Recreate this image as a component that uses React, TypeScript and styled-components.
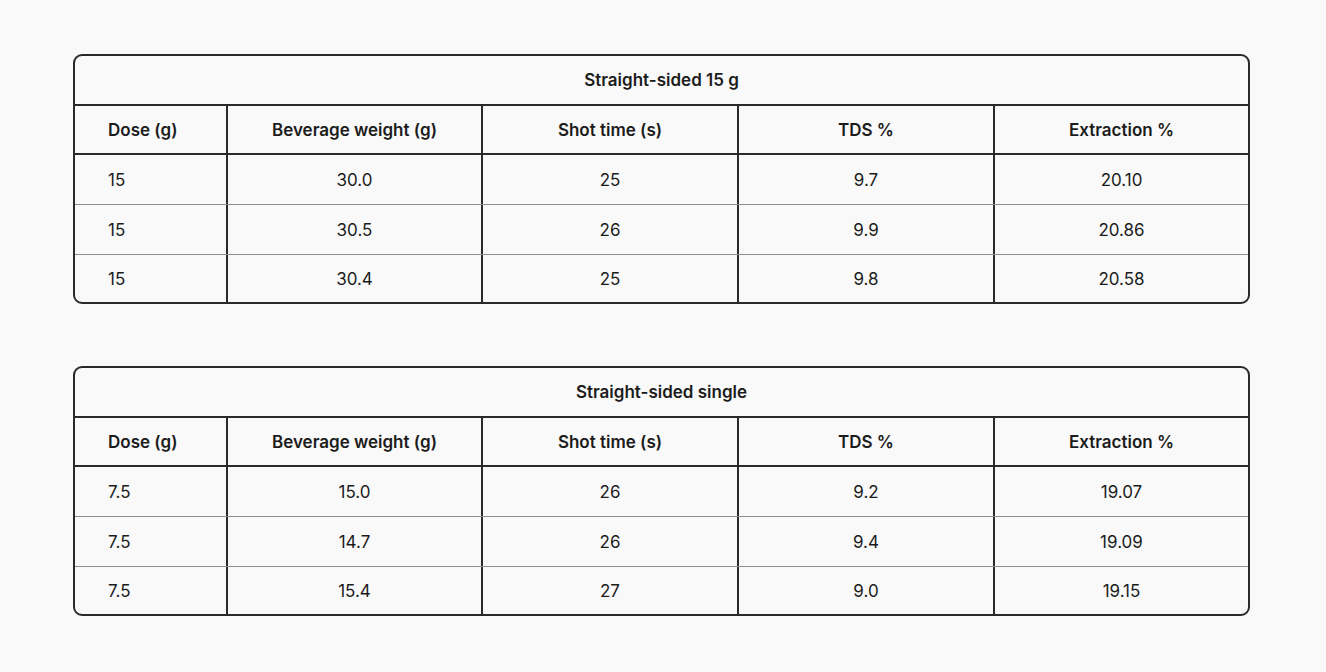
import React from "react";
import styled, { createGlobalStyle } from "styled-components";

const GlobalStyle = createGlobalStyle`
  *, *::before, *::after {
    box-sizing: border-box;
  }
  html, body {
    margin: 0;
    padding: 0;
    background: #f9f9f9;
  }
  body {
    font-family: Inter, Lato, "Noto Sans", Arial, sans-serif;
    color: #1c1c1c;
  }
`;

interface ITableData {
  title: string;
  rows: string[][];
}

const HEADERS = [
  "Dose (g)",
  "Beverage weight (g)",
  "Shot time (s)",
  "TDS %",
  "Extraction %",
];

const TABLES: ITableData[] = [
  {
    title: "Straight-sided 15 g",
    rows: [
      ["15", "30.0", "25", "9.7", "20.10"],
      ["15", "30.5", "26", "9.9", "20.86"],
      ["15", "30.4", "25", "9.8", "20.58"],
    ],
  },
  {
    title: "Straight-sided single",
    rows: [
      ["7.5", "15.0", "26", "9.2", "19.07"],
      ["7.5", "14.7", "26", "9.4", "19.09"],
      ["7.5", "15.4", "27", "9.0", "19.15"],
    ],
  },
];

function ResultTable({ title, rows }: ITableData) {
  return (
    <TableBox>
      <TitleRow>{title}</TitleRow>
      <HeadRow>
        {HEADERS.map((h, i) => (
          <Cell key={h} $first={i === 0} $head>
            {h}
          </Cell>
        ))}
      </HeadRow>
      {rows.map((row, r) => (
        <BodyRow key={r} $last={r === rows.length - 1}>
          {row.map((v, i) => (
            <Cell key={i} $first={i === 0}>
              {v}
            </Cell>
          ))}
        </BodyRow>
      ))}
    </TableBox>
  );
}

export default function App() {
  return (
    <>
      <GlobalStyle />
      <Page>
        {TABLES.map((t) => (
          <ResultTable key={t.title} title={t.title} rows={t.rows} />
        ))}
      </Page>
    </>
  );
}

const COLUMNS = "153px 255px 256px 256px 1fr";

const Page = styled.div`
  display: flex;
  flex-direction: column;
  gap: 62px;
  padding: 54px 0 0 73px;
  width: 1250px;
`;

const TableBox = styled.div`
  border: 2px solid #2a2a2a;
  border-radius: 9px;
  overflow: hidden;
  display: flex;
  flex-direction: column;
`;

const TitleRow = styled.div`
  height: 50px;
  display: flex;
  align-items: center;
  justify-content: center;
  border-bottom: 2px solid #2a2a2a;
  font-size: 17px;
  font-weight: 600;
`;

const HeadRow = styled.div`
  display: grid;
  grid-template-columns: ${COLUMNS};
  height: 49px;
  border-bottom: 2px solid #2a2a2a;
`;

const BodyRow = styled.div<{ $last?: boolean }>`
  display: grid;
  grid-template-columns: ${COLUMNS};
  height: ${(p) => (p.$last ? "47px" : "50px")};
  border-bottom: ${(p) => (p.$last ? "none" : "1px solid #8c8c8c")};
`;

const Cell = styled.div<{ $first?: boolean; $head?: boolean }>`
  display: flex;
  align-items: center;
  justify-content: ${(p) => (p.$first ? "flex-start" : "center")};
  padding-left: ${(p) => (p.$first ? "33px" : "0")};
  border-right: 2px solid #2a2a2a;
  font-size: 17px;
  font-weight: ${(p) => (p.$head ? 600 : 400)};

  &:last-child {
    border-right: none;
  }
`;
